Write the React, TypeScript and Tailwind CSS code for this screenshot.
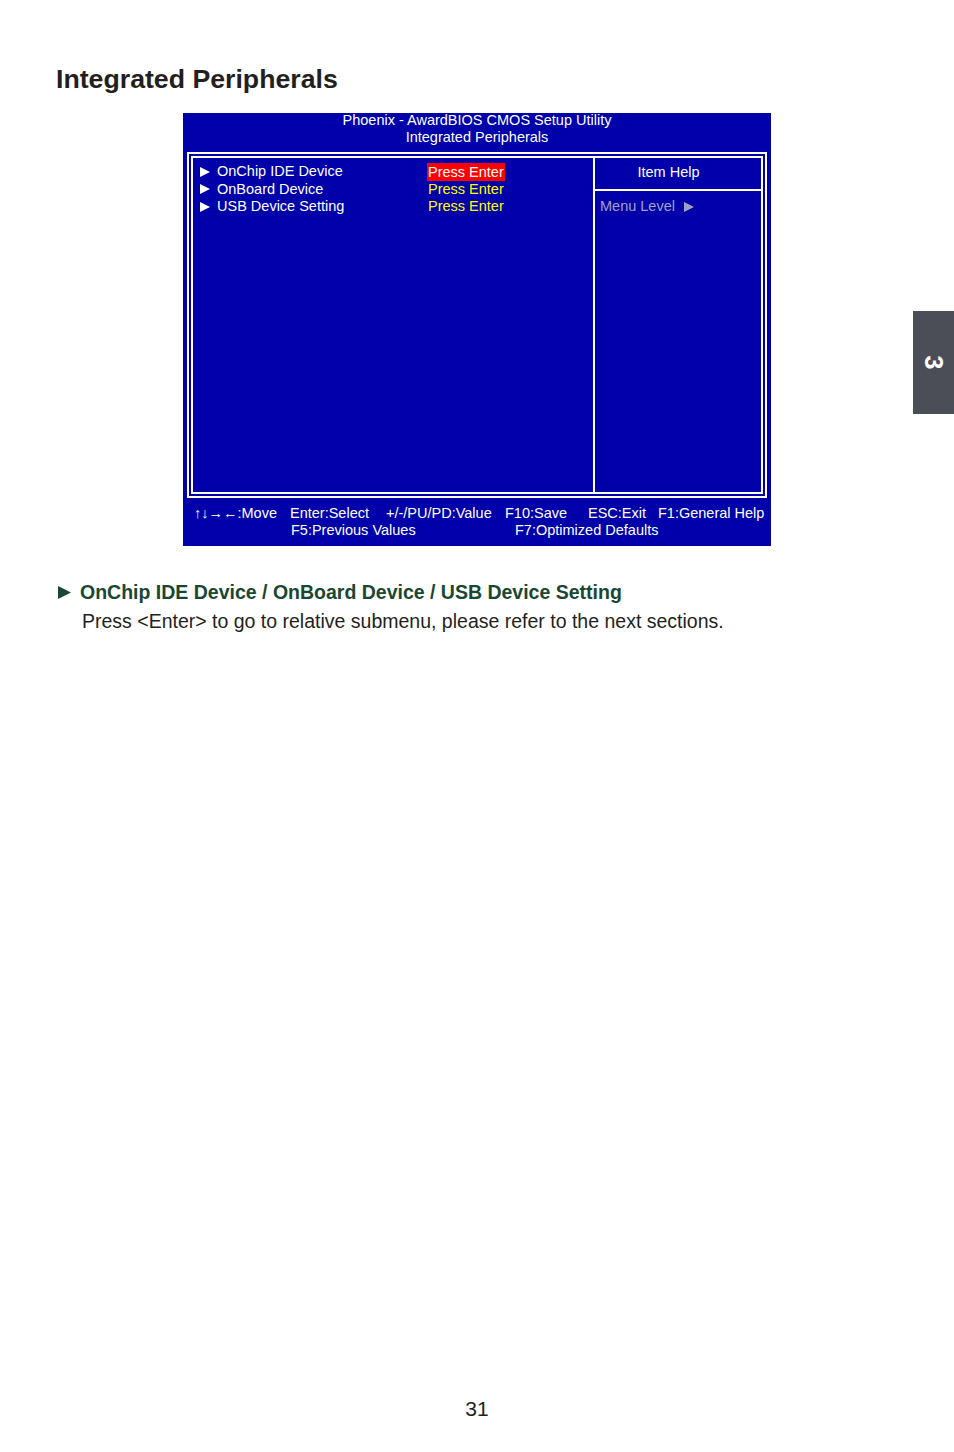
import React from "react";

const items = ["OnChip IDE Device", "OnBoard Device", "USB Device Setting"];

function Tri({ className }: { className?: string }) {
  return (
    <svg viewBox="0 0 10 10" className={className}>
      <path d="M0 0 L10 5 L0 10 Z" fill="currentColor" />
    </svg>
  );
}

function BiosScreen() {
  return (
    <div className="w-[588px] h-[433px] bg-[#0000aa] text-white text-[14.5px] leading-[17px] flex flex-col px-[4px]">
      {/* title */}
      <div className="h-[39px] -mt-[1px] text-center">
        <div>Phoenix - AwardBIOS CMOS Setup Utility</div>
        <div>Integrated Peripherals</div>
      </div>

      {/* double frame */}
      <div className="h-[346px] mt-[1px] border-2 border-white p-[2px]">
        <div className="h-full border-2 border-white flex">
          <div className="w-[402px] border-r-2 border-white pl-[7px] pt-[5px]">
            {items.map((label, i) => (
              <div key={label} className="flex items-center h-[17.5px]">
                <Tri className="w-[10px] h-[10px] text-white" />
                <span className="ml-[7px] w-[211px]">{label}</span>
                {i === 0 ? (
                  <span className="bg-[#ff0000] text-white px-[1px] leading-[18px] -ml-[1px]">Press Enter</span>
                ) : (
                  <span className="text-[#ffff00]">Press Enter</span>
                )}
              </div>
            ))}
          </div>
          <div className="flex-1 flex flex-col">
            <div className="h-[33px] border-b-2 border-white flex items-center justify-center pb-[3px] pr-[19px]">
              Item Help
            </div>
            <div className="pl-[5px] pt-[7px] flex items-center text-[#a0a0c4]">
              <span>Menu Level</span>
              <Tri className="w-[10px] h-[10px] ml-[9px]" />
            </div>
          </div>
        </div>
      </div>

      {/* footer keys */}
      <div className="pt-[7px] h-[44px]">
        <div className="flex whitespace-nowrap">
          <span className="ml-[7px] w-[96px]">↑↓→←:Move</span>
          <span className="w-[96px]">Enter:Select</span>
          <span className="w-[119px]">+/-/PU/PD:Value</span>
          <span className="w-[83px]">F10:Save</span>
          <span className="w-[70px]">ESC:Exit</span>
          <span>F1:General Help</span>
        </div>
        <div className="flex whitespace-nowrap">
          <span className="ml-[104px] w-[224px]">F5:Previous Values</span>
          <span>F7:Optimized Defaults</span>
        </div>
      </div>
    </div>
  );
}

export default function App() {
  return (
    <div className="relative w-[954px] h-[1452px] bg-white font-['Liberation_Sans',Arial,sans-serif]">
      <div className="pt-[62px] pl-[56px]">
        <h1 className="text-[26.7px] font-bold text-[#231f20] leading-[34px]">Integrated Peripherals</h1>
      </div>

      <div className="mt-[17px] pl-[183px]">
        <BiosScreen />
      </div>

      <div className="mt-[33px] pl-[58px]">
        <div className="flex items-center text-[#1a4731]">
          <Tri className="w-[13px] h-[13px]" />
          <h2 className="ml-[9px] text-[19.5px] font-bold leading-[26px]">
            OnChip IDE Device / OnBoard Device / USB Device Setting
          </h2>
        </div>
        <p className="pl-[24px] mt-[3px] text-[19.5px] leading-[26px] text-[#231f20]">
          Press &lt;Enter&gt; to go to relative submenu, please refer to the next sections.
        </p>
      </div>

      {/* chapter tab */}
      <div className="absolute right-0 top-[311px] w-[41px] h-[103px] bg-[#4b4e56] flex items-center justify-center">
        <span className="rotate-90 text-white font-bold text-[25px] leading-none">3</span>
      </div>

      {/* page number */}
      <div className="absolute left-0 right-0 top-[1396px] text-center text-[21px] text-[#231f20] leading-[26px]">
        31
      </div>
    </div>
  );
}
